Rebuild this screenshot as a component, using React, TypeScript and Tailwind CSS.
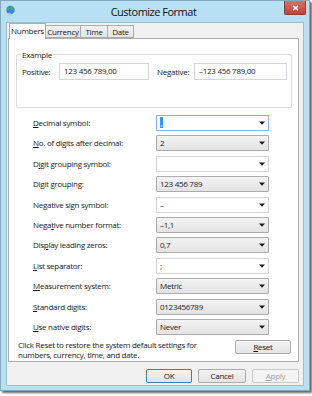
import React from "react";

// Windows 8 "Customize Format" dialog, Numbers tab.

type Row = {
  pre: string;
  key: string;
  post: string;
  value: string;
  kind: "edit" | "drop";
  focus?: boolean;
};

const rows: Row[] = [
  { pre: "", key: "D", post: "ecimal symbol:", value: ",", kind: "edit", focus: true },
  { pre: "", key: "N", post: "o. of digits after decimal:", value: "2", kind: "drop" },
  { pre: "D", key: "i", post: "git grouping symbol:", value: "", kind: "edit" },
  { pre: "Di", key: "g", post: "it grouping:", value: "123 456 789", kind: "drop" },
  { pre: "Ne", key: "g", post: "ative sign symbol:", value: "–", kind: "edit" },
  { pre: "Nega", key: "t", post: "ive number format:", value: "–1,1", kind: "drop" },
  { pre: "Dis", key: "p", post: "lay leading zeros:", value: "0,7", kind: "drop" },
  { pre: "", key: "L", post: "ist separator:", value: ";", kind: "edit" },
  { pre: "", key: "M", post: "easurement system:", value: "Metric", kind: "drop" },
  { pre: "", key: "S", post: "tandard digits:", value: "0123456789", kind: "drop" },
  { pre: "", key: "U", post: "se native digits:", value: "Never", kind: "drop" },
];

function Arrow() {
  return (
    <svg width="6" height="4" viewBox="0 0 6 4" className="shrink-0">
      <path d="M0 0.5h6L3 3.8z" fill="#1a1a1a" />
    </svg>
  );
}

function Combo({ row }: { row: Row }) {
  const base = "w-[113px] h-[16px] flex items-center pl-[3px] pr-[3px] border";
  const look =
    row.kind === "drop"
      ? "bg-gradient-to-b from-[#f3f3f3] to-[#e3e3e3] border-[#acacac] rounded-[1px]"
      : row.focus
      ? "bg-white border-[#7eb4ea]"
      : "bg-white border-[#d2d6dc]";
  return (
    <div className={`${base} ${look}`}>
      <div className="flex-1 leading-none">
        {row.focus ? (
          <span className="bg-[#3399ff] text-white px-[0.5px]">{row.value}</span>
        ) : (
          row.value
        )}
      </div>
      <Arrow />
    </div>
  );
}

function Button({ children, primary, disabled }: { children: React.ReactNode; primary?: boolean; disabled?: boolean }) {
  return (
    <div
      className={`h-[14px] flex items-center justify-center border rounded-[2px] leading-none ${
        disabled
          ? "bg-[#f4f4f4] border-[#c9c9c9] text-[#a0a0a0]"
          : primary
          ? "bg-gradient-to-b from-[#f3f3f3] to-[#e3e3e3] border-[#3c7fb1]"
          : "bg-gradient-to-b from-[#f3f3f3] to-[#e3e3e3] border-[#acacac]"
      }`}
    >
      {children}
    </div>
  );
}

function Globe() {
  return (
    <svg width="11" height="11" viewBox="0 0 11 11">
      <circle cx="5.5" cy="5" r="4.3" fill="#2f8fd8" />
      <path d="M3 2.2c1 .3 1.6 1 1.2 2-.4.8-1.4.9-1.6 1.8-.3-.6-.9-1.4-.5-2.5z" fill="#52b043" />
      <path d="M6.2 1.2c1.2.2 2.4 1.2 2.9 2.4-.6.2-1.2 0-1.6.4-.4.6.2 1.4-.3 2.2-.5-.6-1-1.2-.8-2.2-.6-.2-.6-1.4-.2-2.8z" fill="#52b043" />
      <rect x="1" y="8.2" width="5" height="2.6" rx="0.5" fill="#c8ccd0" />
    </svg>
  );
}

export default function App() {
  return (
    <div className="w-[312px] h-[396px] bg-white font-['Open_Sans',sans-serif] text-[8px] tracking-[-0.28px] text-[#1a1a1a]">
      <div className="w-[310px] h-[391px] bg-[#b7e1f3] border border-[#84a9bb] shadow-[2px_2px_2px_rgba(0,0,0,0.6)] flex flex-col">
        {/* title bar */}
        <div className="h-[21px] flex items-start shrink-0">
          <div className="ml-[4px] mt-[4px]">
            <Globe />
          </div>
          <div className="flex-1 pl-[7px] pt-[3px] text-center text-[11px] tracking-[-0.5px] leading-[15px] text-[#111]">Customize Format</div>
          <div className="mr-[3px] w-[22px] h-[14px] bg-gradient-to-b from-[#d7716b] to-[#c2413a] border border-[#8e3a35] border-t-0 rounded-b-[2px] flex items-center justify-center">
            <svg width="7" height="6" viewBox="0 0 7 6">
              <path d="M1 0.8l5 4.4M6 0.8l-5 4.4" stroke="white" strokeWidth="1.6" />
            </svg>
          </div>
        </div>

        {/* client area */}
        <div className="mx-[5px] w-[298px] h-[364px] bg-[#f0f0f0] border border-[#9dbccc] flex flex-col">
          {/* tabs */}
          <div className="ml-[1px] flex items-end h-[15px] relative z-10">
            <div className="ml-[1px] w-[37px] h-[16px] -mb-[1px] bg-white border border-b-0 border-[#acacac] flex items-center justify-center pb-[1px]">
              Numbers
            </div>
            <div className="w-[35px] h-[13px] bg-gradient-to-b from-[#f1f1f1] to-[#e4e4e4] border border-l-0 border-[#acacac] flex items-center justify-center">
              Currency
            </div>
            <div className="w-[27px] h-[13px] bg-gradient-to-b from-[#f1f1f1] to-[#e4e4e4] border border-l-0 border-[#acacac] flex items-center justify-center">
              Time
            </div>
            <div className="w-[26px] h-[13px] bg-gradient-to-b from-[#f1f1f1] to-[#e4e4e4] border border-l-0 border-[#acacac] flex items-center justify-center">
              Date
            </div>
          </div>

          {/* tab panel */}
          <div className="ml-[1px] w-[291px] h-[324px] bg-white border border-[#acacac] flex flex-col">
            {/* example group */}
            <div className="relative ml-[7px] mt-[15px] w-[276px] h-[54px] border border-[#dcdcdc] rounded-[2px]">
              <div className="absolute -top-[6px] left-[4px] bg-white px-[1px] leading-[11px]">Example</div>
              <div className="flex items-center mt-[8px] ml-[5px]">
                <div className="w-[37px]">Positive:</div>
                <div className="w-[90px] h-[17px] border border-[#d2d6dc] pl-[4px] flex items-center pb-[2px]">123 456 789,00</div>
                <div className="ml-[8px] w-[37px]">Negative:</div>
                <div className="w-[93px] h-[17px] border border-[#d2d6dc] pl-[4px] flex items-center pb-[2px]">–123 456 789,00</div>
              </div>
            </div>

            {/* settings rows */}
            <div className="mt-[4.8px] flex flex-col">
              {rows.map((r) => (
                <div key={r.pre + r.key + r.post} className="h-[20.4px] flex items-center">
                  <div className="ml-[24px] w-[123px]">
                    {r.pre}
                    <u>{r.key}</u>
                    {r.post}
                  </div>
                  <Combo row={r} />
                </div>
              ))}
            </div>

            {/* reset */}
            <div className="mt-[3px] flex items-start">
              <div className="ml-[9px] flex-1 leading-[9.5px]">
                Click Reset to restore the system default settings for
                <br />
                numbers, currency, time, and date.
              </div>
              <div className="mr-[7px] w-[56px]">
                <Button>
                  <u>R</u>eset
                </Button>
              </div>
            </div>
          </div>

          {/* dialog buttons */}
          <div className="mt-[7px] mr-[4px] flex justify-end gap-[6px]">
            <div className="w-[46px]">
              <Button primary>OK</Button>
            </div>
            <div className="w-[48px]">
              <Button>Cancel</Button>
            </div>
            <div className="w-[47px]">
              <Button disabled>
                <u>A</u>pply
              </Button>
            </div>
          </div>
        </div>
      </div>
    </div>
  );
}
